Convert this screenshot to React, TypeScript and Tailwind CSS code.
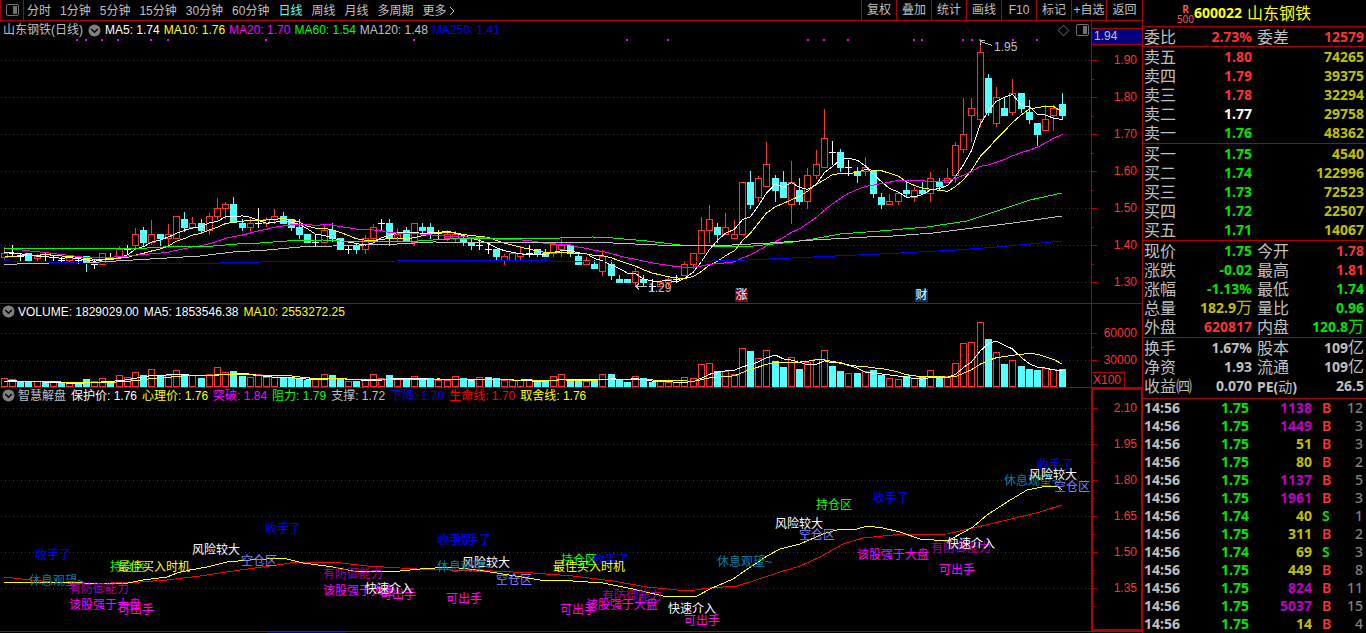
import React from 'react';

type Kind = 'r' | 'c' | 'w';
type Candle = [Kind, number, number, number, number];

const PLOT_W = 1091;

// kind, high, body top, body bottom, low (chart units)
const candles: Candle[] = [
  ['r', 247, 253, 257, 260], ['w', 245, 253, 253, 255], ['w', 253, 256, 256, 260], ['c', 253, 253, 260, 260],
  ['r', 254, 256, 258, 260], ['w', 253, 256, 256, 260], ['w', 255, 257, 257, 260], ['w', 257, 260, 260, 262],
  ['r', 257, 257, 260, 262], ['w', 257, 260, 260, 263], ['c', 256, 256, 263, 271], ['w', 260, 264, 264, 268],
  ['r', 253, 253, 264, 264], ['w', 253, 257, 257, 259], ['r', 246, 249, 257, 257], ['w', 245, 249, 249, 254],
  ['r', 228, 234, 245, 248], ['c', 227, 230, 242, 245], ['r', 220, 234, 242, 244], ['c', 234, 234, 238, 245],
  ['r', 224, 234, 238, 247], ['r', 216, 216, 238, 238], ['c', 212, 219, 227, 231], ['r', 217, 223, 227, 228],
  ['c', 219, 223, 230, 233], ['r', 213, 216, 230, 234], ['r', 198, 208, 216, 219], ['r', 202, 204, 208, 218],
  ['c', 197, 204, 222, 222], ['c', 219, 223, 227, 230], ['r', 218, 223, 227, 230], ['w', 208, 223, 223, 227],
  ['r', 217, 219, 223, 226], ['r', 209, 216, 219, 223], ['c', 212, 216, 223, 223], ['c', 219, 219, 227, 230],
  ['c', 219, 227, 234, 238], ['c', 234, 234, 242, 242], ['w', 234, 242, 242, 245], ['r', 224, 230, 242, 242],
  ['c', 223, 230, 238, 241], ['c', 238, 238, 249, 249], ['w', 246, 249, 249, 253], ['c', 244, 245, 249, 253],
  ['r', 235, 238, 249, 253], ['r', 224, 227, 238, 242], ['w', 219, 223, 223, 230], ['c', 219, 223, 238, 245],
  ['r', 228, 234, 238, 240], ['c', 227, 230, 241, 241], ['r', 223, 223, 242, 245], ['c', 223, 227, 230, 233],
  ['c', 223, 227, 233, 238], ['w', 230, 233, 233, 238], ['r', 230, 234, 238, 240], ['r', 231, 234, 238, 242],
  ['c', 235, 238, 242, 245], ['c', 238, 242, 245, 249], ['w', 238, 245, 245, 249], ['w', 242, 249, 249, 253],
  ['c', 249, 249, 256, 260], ['r', 254, 256, 260, 264], ['r', 253, 253, 260, 260], ['r', 246, 253, 256, 260],
  ['w', 245, 253, 253, 256], ['c', 249, 249, 253, 256], ['c', 249, 253, 256, 256], ['r', 244, 244, 253, 256],
  ['r', 239, 245, 249, 256], ['c', 245, 245, 253, 256], ['c', 253, 256, 264, 264], ['r', 257, 260, 264, 264],
  ['c', 260, 264, 268, 268], ['r', 250, 256, 271, 275], ['c', 260, 264, 275, 279], ['c', 275, 279, 282, 282],
  ['c', 279, 279, 282, 282], ['r', 268, 271, 282, 286], ['c', 275, 279, 282, 286], ['w', 279, 286, 286, 291],
  ['r', 280, 282, 286, 286], ['r', 277, 279, 282, 286], ['w', 275, 279, 279, 282], ['r', 262, 264, 275, 275],
  ['r', 253, 253, 264, 268], ['r', 217, 230, 253, 253], ['r', 205, 219, 230, 242], ['c', 223, 227, 234, 242],
  ['r', 213, 227, 234, 234], ['r', 220, 234, 238, 238], ['r', 182, 182, 234, 234], ['c', 171, 182, 204, 208],
  ['r', 176, 178, 197, 201], ['r', 142, 164, 186, 186], ['c', 175, 178, 190, 201], ['c', 171, 182, 197, 197],
  ['r', 161, 182, 204, 223], ['c', 178, 190, 201, 204], ['r', 168, 175, 201, 208], ['r', 150, 164, 175, 178],
  ['r', 109, 138, 167, 167], ['w', 141, 152, 152, 164], ['c', 149, 152, 167, 171], ['w', 160, 167, 167, 175],
  ['c', 167, 171, 175, 182], ['r', 157, 167, 171, 175], ['c', 171, 171, 193, 197], ['c', 193, 197, 204, 208],
  ['r', 194, 201, 204, 204], ['r', 193, 193, 201, 204], ['c', 181, 190, 193, 197], ['r', 187, 190, 197, 201],
  ['c', 182, 190, 193, 193], ['r', 172, 178, 193, 201], ['c', 178, 182, 186, 190], ['r', 168, 178, 182, 182],
  ['r', 142, 145, 175, 182], ['r', 98, 134, 149, 152], ['r', 98, 108, 115, 141], ['r', 40, 52, 119, 126],
  ['c', 74, 78, 112, 115], ['r', 87, 97, 123, 126], ['c', 98, 108, 115, 115], ['r', 79, 93, 112, 115],
  ['c', 93, 93, 108, 112], ['c', 100, 112, 119, 123], ['c', 123, 123, 134, 145], ['r', 105, 119, 130, 130],
  ['r', 105, 108, 115, 130], ['c', 93, 104, 115, 119],
];

// bar colour and top, measured in thirds of a unit below 300
const volumeText =
  'r238 r241 c245 c245 r246 c245 r250 c248 r249 c248 c240 r245 r238 c245 r229 r233 r220 c228 r211 c232 r228 r214 c226 r229 c237 ' +
  'r226 r205 r220 c216 c231 r235 r226 r235 r229 c234 c237 c237 c243 r241 r226 c228 c240 r247 c246 r240 r226 r236 c228 r240 c238 ' +
  'r232 c238 c238 r244 r243 r232 c238 c241 r235 c234 c238 r244 r244 r244 r240 c244 c244 r232 r226 c240 c240 r247 c240 r226 c225 ' +
  'c243 c249 r232 c238 c248 r247 r249 r248 r235 r238 r196 r193 c217 r215 r226 r148 c156 r178 r154 c187 c204 r175 c210 r190 r180 ' +
  'r154 c201 c216 r223 c222 r217 c213 c228 r238 r241 c231 r236 c235 r214 c237 r232 r193 r133 r130 r70 c120 r160 c195 r184 c201 ' +
  'c210 c213 r208 r209 c210';
const volumes = volumeText.split(' ').map((v) => ({ up: v[0] === 'r', top: Math.round(300 + Number(v.slice(1)) / 3) }));

const xAt = (i: number) => Math.floor(4.33 + i * 8.2);

function movingAverage(values: number[], history: number[], span: number) {
  const all = [...history, ...values];
  return values
    .map((_, i) => {
      const end = i + history.length + 1;
      const part = all.slice(end - span, end);
      return `${xAt(i) + 0.5},${(part.reduce((a, b) => a + b, 0) / span + 0.5).toFixed(2)}`;
    })
    .join(' ');
}

const closes = candles.map(([k, , top, bottom]) => (k === 'c' ? bottom : top));
const closeHistory = [...Array(10).fill(239), ...Array(5).fill(261), ...Array(4).fill(252)];
const volumeTops = volumes.map((v) => v.top);
const volumeHistory = Array(9).fill(381);

const ma60 =
  '4,248 147,248 180,246 213,246 237,244 260,243 287,241 323,240 340,241 403,242 433,240 467,238 560,238 593,237 613,238 647,241 680,245 713,246 753,246 793,242 813,239 840,234 880,231 927,227 967,221 997,211 1030,200 1062,193';
const ma120 =
  '4,265 17,264 50,263 100,262 133,260 167,258 200,256 233,252 267,250 300,247 333,246 397,244 433,242 613,243 657,245 713,246 770,243 813,240 867,237 893,236 933,233 973,228 1013,223 1062,216';
const ma250 =
  '4,260 10,261 83,263 220,263 260,262 397,261 410,260 487,260 613,262 680,262 747,260 813,257 880,254 957,250 997,247 1030,244 1062,241';
const shortLine =
  '4,583 20,582 50,582 83,583 123,584 133,582 143,580 167,577 177,573 190,570 207,567 227,562 250,560 283,558 303,563 333,567 353,571 373,572 400,571 420,569 450,567 477,570 503,574 540,580 573,581 603,583 633,589 663,596 687,597 697,596 710,589 733,579 743,572 767,556 780,549 800,544 823,534 840,529 857,529 867,526 883,528 900,532 920,539 947,541 953,538 973,527 987,515 1007,502 1027,490 1047,486 1057,486 1062,490';
const lifeLine =
  '4,577 30,580 53,582 83,584 140,582 167,580 200,576 233,571 277,565 297,562 333,562 367,566 417,569 450,570 493,571 533,573 573,576 613,581 647,587 687,591 710,588 737,586 753,581 777,573 800,566 820,557 843,544 863,538 893,535 947,534 973,528 1007,520 1040,512 1062,505';

const signalDots = [77, 86, 102, 118, 151, 168, 266, 414, 627, 668, 808, 824, 848, 914, 922, 963, 972, 980, 1013, 1037];

const blue = 'text-[#0000ff]';
const teal = 'text-[#0080a8]';
const plum = 'text-[#a800a8]';
const pink = 'text-[#ff00ff]';
const lime = 'text-[#00ff00]';
const lilac = 'text-[#8080ff]';

const notes: [string, number, number, string][] = [
  ['收手了', 35, 554, blue], ['休息观望~', 29, 580, teal], ['有防御能力', 69, 588, plum], ['该股强于大盘', 69, 604, pink],
  ['可出手', 118, 609, pink], ['最佳买入时机', 118, 566, 'text-[#ffff00]'], ['持仓区', 110, 566, lime],
  ['风险较大', 192, 549, 'text-white'], ['空仓区', 241, 560, lilac], ['收手了', 265, 528, blue],
  ['有防御能力', 323, 573, plum], ['该股强于大盘', 323, 590, pink], ['可出手', 380, 594, pink],
  ['快速介入', 365, 588, 'text-white'], ['收手了', 437, 539, blue], ['收手了', 455, 539, blue],
  ['风险较大', 462, 562, 'text-white'], ['休息观望~', 437, 566, teal], ['空仓区', 496, 579, lilac],
  ['可出手', 446, 598, pink], ['持仓区', 561, 559, lime], ['收手了', 593, 559, blue],
  ['最佳买入时机', 553, 566, 'text-[#ffff00]'], ['有防御能力', 602, 595, plum], ['可出手', 560, 609, pink],
  ['该股强于大盘', 586, 604, pink], ['快速介入', 668, 608, 'text-white'], ['可出手', 684, 620, pink],
  ['休息观望~', 717, 561, teal], ['风险较大', 775, 523, 'text-white'], ['空仓区', 799, 534, lilac],
  ['持仓区', 816, 504, lime], ['收手了', 873, 497, blue], ['该股强于大盘', 857, 554, pink],
  ['有防御能力', 931, 547, plum], ['快速介入', 947, 543, 'text-white'], ['可出手', 939, 569, pink],
  ['收手了', 1037, 464, blue], ['休息观望~', 1004, 480, teal], ['风险较大', 1029, 474, 'text-white'],
  ['空仓区', 1054, 486, lilac],
];

const periods = ['分时', '1分钟', '5分钟', '15分钟', '30分钟', '60分钟', '日线', '周线', '月线', '多周期'];
const tools = ['复权', '叠加', '统计', '画线', 'F10', '标记', '+自选', '返回'];

function Note({ x, y, className, children }: { x: number; y: number; className: string; children: React.ReactNode }) {
  return (
    <span
      className={`absolute whitespace-nowrap text-xs leading-4 ${className}`}
      style={{ left: `${(x / PLOT_W) * 100}%`, top: y - 7 }}
    >
      {children}
    </span>
  );
}

function Plot({ top, height, grid, children }: { top: number; height: number; grid: number[]; children: React.ReactNode }) {
  return (
    <svg
      className="block w-full"
      height={height}
      viewBox={`0 ${top} ${PLOT_W} ${height}`}
      preserveAspectRatio="none"
      shapeRendering="crispEdges"
      fill="none"
      aria-hidden="true"
    >
      {grid.map((y) => (
        <line key={y} x1={1} x2={PLOT_W} y1={y + 0.5} y2={y + 0.5} stroke="#b00000" strokeDasharray="1 3" />
      ))}
      {children}
    </svg>
  );
}

function Ticks({ top, height, major, minor }: { top: number; height: number; major: number[]; minor: number[] }) {
  return (
    <svg
      className="absolute left-0 top-0"
      width={6}
      height={height}
      viewBox={`0 ${top} 6 ${height}`}
      shapeRendering="crispEdges"
      stroke="#b00000"
      aria-hidden="true"
    >
      {major.map((y) => (
        <line key={y} x1={0} x2={5} y1={y + 0.5} y2={y + 0.5} />
      ))}
      {minor.map((y) => (
        <line key={y} x1={0} x2={2} y1={y + 0.5} y2={y + 0.5} />
      ))}
    </svg>
  );
}

function CollapseButton() {
  return (
    <button type="button" aria-label="展开" className="shrink-0">
      <svg width="13" height="13" viewBox="0 0 13 13" fill="none" className="block">
        <circle cx="6.5" cy="6.5" r="6" fill="#808080" />
        <path d="M3.2 5 L6.5 8.3 L9.8 5" stroke="#000" strokeWidth="1.5" />
      </svg>
    </button>
  );
}

function SidebarIcon() {
  return (
    <svg width="13" height="12" viewBox="0 0 13 12" fill="none" className="block">
      <rect x="0.5" y="0.5" width="12" height="11" rx="1.5" stroke="#707070" />
      <rect x="7" y="2" width="4" height="8" fill="#707070" />
    </svg>
  );
}

function CandleChart() {
  return (
    <Plot top={39} height={264} grid={[60, 97, 134, 171, 208, 245, 282]}>
      {signalDots.map((x) => (
        <rect key={x} x={x - 1} y={39} width={2} height={2} fill="#ff00ff" />
      ))}
      {candles.map(([kind, high, top, bottom, low], i) => {
        const x = xAt(i);
        if (kind === 'r')
          return (
            <g key={i} stroke="#ff3232">
              {high < top && <line x1={x + 0.5} x2={x + 0.5} y1={high} y2={top} />}
              {low > bottom && <line x1={x + 0.5} x2={x + 0.5} y1={bottom + 1} y2={low + 1} />}
              <rect x={x - 2.5} y={top + 0.5} width={6} height={bottom - top} />
            </g>
          );
        if (kind === 'c')
          return (
            <g key={i} fill="#54ffff">
              <rect x={x} y={high} width={1} height={low - high + 1} />
              <rect x={x - 3} y={top} width={7} height={bottom - top + 1} />
            </g>
          );
        return (
          <g key={i} fill="#ffffff">
            <rect x={x} y={high} width={1} height={low - high + 1} />
            <rect x={x - 3} y={top} width={7} height={1} />
          </g>
        );
      })}
      <polyline points={movingAverage(closes, closeHistory, 5)} stroke="#ffffff" />
      <polyline points={movingAverage(closes, closeHistory, 10)} stroke="#ffff00" />
      <polyline points={movingAverage(closes, closeHistory, 20)} stroke="#ff00ff" />
      <polyline points={ma60} stroke="#00ff00" />
      <polyline points={ma120} stroke="#c0c0c0" />
      <polyline points={ma250} stroke="#0000ff" />
      <path d="M992 45.5 L981 41.5 M980.5 45 V40.5 H985" stroke="#c0c0c0" />
      <path d="M647 286.5 H636 M639 283.5 L636 286.5 L639 289.5" stroke="#c0c0c0" />
    </Plot>
  );
}

function VolumeChart() {
  return (
    <Plot top={321} height={66} grid={[333, 360]}>
      {volumes.map(({ up, top }, i) => {
        const x = xAt(i);
        return up ? (
          <rect key={i} x={x - 2.5} y={top - 0.5} width={6} height={387 - top} stroke="#ff3232" />
        ) : (
          <rect key={i} x={x - 3} y={top - 1} width={7} height={388 - top} fill="#54ffff" />
        );
      })}
      <polyline points={movingAverage(volumeTops, volumeHistory, 5)} stroke="#ffffff" />
      <polyline points={movingAverage(volumeTops, volumeHistory, 10)} stroke="#ffff00" />
    </Plot>
  );
}

const RED = 'text-[#ff3232]';
const GREEN = 'text-[#00e600]';
const GOLD = 'text-[#c0c000]';
const GREY = 'text-[#c0c0c0]';
const PURPLE = 'text-[#c000c0]';

type QuoteRow = [string, string, string, string, string, string];

const ratioRows: QuoteRow[] = [['委比', '2.73%', RED, '委差', '12579', RED]];
const sellRows: QuoteRow[] = [
  ['卖五', '1.80', RED, '', '74265', GOLD],
  ['卖四', '1.79', RED, '', '39375', GOLD],
  ['卖三', '1.78', RED, '', '32294', GOLD],
  ['卖二', '1.77', 'text-white', '', '29758', GOLD],
  ['卖一', '1.76', GREEN, '', '48362', GOLD],
];
const buyRows: QuoteRow[] = [
  ['买一', '1.75', GREEN, '', '4540', GOLD],
  ['买二', '1.74', GREEN, '', '122996', GOLD],
  ['买三', '1.73', GREEN, '', '72523', GOLD],
  ['买四', '1.72', GREEN, '', '22507', GOLD],
  ['买五', '1.71', GREEN, '', '14067', GOLD],
];
const priceRows: QuoteRow[] = [
  ['现价', '1.75', GREEN, '今开', '1.78', RED],
  ['涨跌', '-0.02', GREEN, '最高', '1.81', RED],
  ['涨幅', '-1.13%', GREEN, '最低', '1.74', GREEN],
  ['总量', '182.9万', GOLD, '量比', '0.96', GREEN],
  ['外盘', '620817', RED, '内盘', '120.8万', GREEN],
];
const basicRows: QuoteRow[] = [
  ['换手', '1.67%', GREY, '股本', '109亿', GREY],
  ['净资', '1.93', GREY, '流通', '109亿', GREY],
  ['收益㈣', '0.070', GREY, 'PE(动)', '26.5', GREY],
];

const trades: [string, string, string, string][] = [
  ['1.75', '1138', 'B', '12'], ['1.75', '1449', 'B', '3'], ['1.75', '51', 'B', '3'], ['1.75', '80', 'B', '2'],
  ['1.75', '1137', 'B', '5'], ['1.75', '1961', 'B', '3'], ['1.74', '40', 'S', '1'], ['1.75', '311', 'B', '2'],
  ['1.74', '69', 'S', '3'], ['1.75', '449', 'B', '8'], ['1.75', '824', 'B', '11'], ['1.75', '5037', 'B', '15'],
  ['1.75', '14', 'B', '4'],
];

function Value({ text }: { text: string }) {
  const unit = /[万亿]$/.test(text) ? text.slice(-1) : '';
  return (
    <>
      {unit ? text.slice(0, -1) : text}
      {unit && <span className="text-base leading-none font-normal">{unit}</span>}
    </>
  );
}

function QuoteTable({ rows, label, className }: { rows: QuoteRow[]; label: string; className: string }) {
  return (
    <div className={`border-b border-[#b00000] ${className}`}>
      <table aria-label={label} className="w-full table-fixed border-collapse">
        <colgroup>
          <col className="w-[49px]" />
          <col className="w-[60px]" />
          <col className="w-[53px]" />
          <col />
        </colgroup>
        <tbody>
          {rows.map(([name, value, tone, name2, value2, tone2]) => (
            <tr key={name} className="h-[19px] whitespace-nowrap leading-[19px]">
              <th scope="row" className="p-0 pt-0.5 pl-px text-left text-base leading-[17px] font-normal text-[#c0c0c0]">
                {name}
              </th>
              <td className={`p-0 text-right text-sm leading-[19px] font-bold ${tone}`}>
                <Value text={value} />
              </td>
              <th scope="row" className="p-0 pt-0.5 pl-[5px] text-left text-base leading-[17px] font-normal text-[#c0c0c0]">
                {name2 === 'PE(动)' ? (
                  <>
                    <span className="text-sm leading-none font-bold">PE(</span>
                    <span className="text-sm leading-none">动</span>
                    <span className="text-sm leading-none font-bold">)</span>
                  </>
                ) : (
                  name2
                )}
              </th>
              <td className={`p-0 pr-0.5 text-right text-sm leading-[19px] font-bold ${tone2}`}>
                <Value text={value2} />
              </td>
            </tr>
          ))}
        </tbody>
      </table>
    </div>
  );
}

function tradeTone(volume: string) {
  return Number(volume) > 500 ? PURPLE : GOLD;
}

export default function App() {
  return (
    <div className="flex min-h-screen overflow-hidden bg-black font-['Liberation_Sans','Noto_Sans_CJK_SC',sans-serif] text-xs text-[#c0c0c0]">
      <main className="flex min-w-0 flex-1 flex-col">
        <nav className="flex h-[21px] items-stretch border-b border-[#b00000]">
          <button type="button" aria-label="侧栏" className="flex w-6 items-center justify-center border-x border-[#b00000]">
            <SidebarIcon />
          </button>
          <div className="flex flex-1 items-center gap-[9px] pt-px pl-[3px]">
            {periods.map((p) => (
              <button key={p} type="button" className={p === '日线' ? 'leading-5 text-[#54ffff]' : 'leading-5'}>
                {p}
              </button>
            ))}
            <button type="button" className="flex items-center leading-5">
              更多
              <svg width="10" height="10" viewBox="0 0 10 10" fill="none" stroke="currentColor">
                <path d="M3 1 L7 5 L3 9" />
              </svg>
            </button>
          </div>
          <div className="flex">
            {tools.map((t) => (
              <button
                key={t}
                type="button"
                className="w-[35px] border-l border-[#b00000] pt-px text-center leading-[19px] whitespace-nowrap last:w-9"
              >
                {t}
              </button>
            ))}
          </div>
        </nav>

        <section aria-label="日线图" className="flex border-b border-[#b00000]">
          <div className="min-w-0 flex-1">
            <header className="flex h-[18px] items-center gap-1 pl-[3px] whitespace-nowrap">
              <h2>山东钢铁(日线)</h2>
              <span className="flex pl-px">
                <CollapseButton />
              </span>
              <span className="text-white">MA5: 1.74</span>
              <span className="text-[#ffff00]">MA10: 1.76</span>
              <span className="text-[#ff00ff]">MA20: 1.70</span>
              <span className="text-[#00ff00]">MA60: 1.54</span>
              <span>MA120: 1.48</span>
              <span className="text-[#0000ff]">MA250: 1.41</span>
              <span className="ml-auto flex items-center gap-[6px] pr-[2px]">
                <svg width="13" height="13" viewBox="0 0 13 13" fill="none" stroke="#707070">
                  <path d="M6.5 1.2 L11.8 6.5 L6.5 11.8 L1.2 6.5 Z" />
                </svg>
                <SidebarIcon />
              </span>
            </header>
            <div className="relative">
              <CandleChart />
              <Note x={994} y={7} className="">1.95</Note>
              <Note x={648} y={248} className="">1.29</Note>
              <span
                className="absolute h-[13px] w-[13px] bg-[#800000] text-center text-xs leading-[13px] text-white"
                style={{ left: `${(735 / PLOT_W) * 100}%`, top: 250 }}
              >
                涨
              </span>
              <span
                className="absolute h-[13px] w-[13px] bg-[#003468] text-center text-xs leading-[13px] text-white"
                style={{ left: `${(915 / PLOT_W) * 100}%`, top: 250 }}
              >
                财
              </span>
            </div>
          </div>
          <div className={`relative w-[51px] shrink-0 border-l border-[#b00000] pt-[7px] ${RED}`}>
            <Ticks top={21} height={282} major={[60, 97, 134, 171, 208, 245, 282]} minor={[79, 116, 153, 190, 227, 264]} />
            <div className="h-[17px] border-y border-[#b00000] bg-[#000080] pl-0.5 leading-[15px] text-[#c0c0c0]">1.94</div>
            <div className="mt-2 flex flex-col gap-[22px] pr-[5px] text-right leading-[15px]">
              {['1.90', '1.80', '1.70', '1.60', '1.50', '1.40', '1.30'].map((v) => (
                <span key={v}>{v}</span>
              ))}
            </div>
          </div>
        </section>

        <section aria-label="成交量" className="flex border-b border-[#b00000]">
          <div className="min-w-0 flex-1">
            <header className="flex h-[17px] items-center gap-[5px] pb-0.5 pl-[2px] whitespace-nowrap">
              <span className="-mr-0.5 flex">
                <CollapseButton />
              </span>
              <span className="text-white">VOLUME: 1829029.00</span>
              <span className="text-white">MA5: 1853546.38</span>
              <span className="text-[#ffff00]">MA10: 2553272.25</span>
            </header>
            <VolumeChart />
          </div>
          <div className={`relative flex w-[51px] shrink-0 flex-col border-l border-[#b00000] pt-[22px] ${RED}`}>
            <Ticks top={304} height={83} major={[333, 360]} minor={[347]} />
            <div className="flex flex-col gap-3 pr-[5px] text-right leading-[15px]">
              <span>60000</span>
              <span>30000</span>
            </div>
            <div className="mt-auto w-[33px] border-t border-r border-[#b00000] pl-px leading-[14px]">X100</div>
          </div>
        </section>

        <section aria-label="智慧解盘" className="flex border-b border-[#b00000]">
          <div className="min-w-0 flex-1">
            <header className="flex h-[17px] items-center gap-[5px] pb-0.5 pl-[2px] whitespace-nowrap">
              <span className="-mr-0.5 flex">
                <CollapseButton />
              </span>
              <h2>智慧解盘</h2>
              <span className="text-white">保护价: 1.76</span>
              <span className="text-[#ffff00]">心理价: 1.76</span>
              <span className="text-[#ff00ff]">突破: 1.84</span>
              <span className="text-[#00ff00]">阻力: 1.79</span>
              <span>支撑: 1.72</span>
              <span className="text-[#0000ff]">下降: 1.70</span>
              <span className="text-[#ff0000]">生命线: 1.70</span>
              <span className="text-[#ffff00]">取舍线: 1.76</span>
            </header>
            <div className="relative">
              <Plot top={405} height={226} grid={[408, 444, 480, 516, 552, 588]}>
                <polyline points={lifeLine} stroke="#ff0000" />
                <polyline points={shortLine} stroke="#ffff00" />
              </Plot>
              {notes.map(([text, x, y, tone], i) => (
                <Note key={i} x={x} y={y - 405} className={tone}>
                  {text}
                </Note>
              ))}
            </div>
          </div>
          <div className={`relative w-[51px] shrink-0 border-2 border-r border-[#b00000] pt-[11px] ${RED}`}>
            <Ticks top={390} height={238} major={[408, 444, 480, 516, 552, 588]} minor={[426, 462, 498, 534, 570, 606]} />
            <div className="flex flex-col gap-[21px] pr-1 text-right leading-[15px]">
              {['2.10', '1.95', '1.80', '1.65', '1.50', '1.35'].map((v) => (
                <span key={v}>{v}</span>
              ))}
            </div>
          </div>
        </section>
        <div className="flex h-px">
          <div className="ml-[267px] w-[78px] bg-[#000080]" />
        </div>
      </main>

      <aside className="w-56 shrink-0 overflow-hidden border-l border-[#b00000] font-['Noto_Sans','Noto_Sans_CJK_SC',sans-serif]">
        <header className="flex h-[27px] items-center justify-center border-b border-[#b00000] pr-[21px]">
          <span className="flex flex-col items-center pt-px text-[10px] leading-[10px] text-[#ff5050]">
            <b>R</b>
            <span>500</span>
          </span>
          <h1 className="flex items-center gap-[5px] text-[#ffff00]">
            <span className="text-sm font-bold">600022</span>
            <span className="text-base leading-6">山东钢铁</span>
          </h1>
        </header>
        <QuoteTable rows={ratioRows} label="委比" className="" />
        <QuoteTable rows={sellRows} label="卖盘" className="pb-px" />
        <QuoteTable rows={buyRows} label="买盘" className="pb-px" />
        <QuoteTable rows={priceRows} label="行情" className="pb-px" />
        <QuoteTable rows={basicRows} label="基本" className="pb-[3px]" />
        <table aria-label="成交明细" className="w-full table-fixed border-collapse text-sm font-bold">
          <colgroup>
            <col className="w-[50px]" />
            <col className="w-[56px]" />
            <col className="w-[63px]" />
            <col className="w-[25px]" />
            <col />
          </colgroup>
          <tbody>
            {trades.map(([price, volume, side, count], i) => (
              <tr key={i} className="h-[18px] leading-[18px]">
                <td className="p-0 pl-px text-[#c0c0c0]">14:56</td>
                <td className={`p-0 text-right ${GREEN}`}>{price}</td>
                <td className={`p-0 text-right ${tradeTone(volume)}`}>{volume}</td>
                <td className={`p-0 pl-2.5 font-semibold ${side === 'B' ? RED : GREEN}`}>{side}</td>
                <td className="p-0 pr-[3px] text-right font-medium text-[#808080]">{count}</td>
              </tr>
            ))}
          </tbody>
        </table>
      </aside>
    </div>
  );
}
